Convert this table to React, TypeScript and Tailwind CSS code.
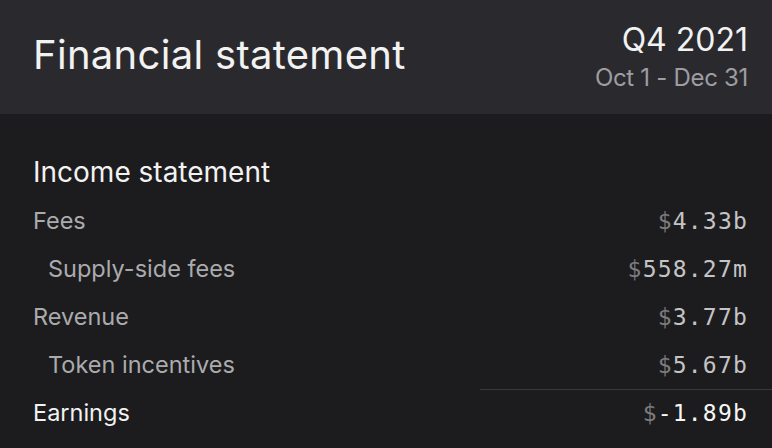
import React from 'react';

type Row = { label: string; value: string; sub?: boolean; total?: boolean };

const rows: Row[] = [
  { label: 'Fees', value: '4.33b' },
  { label: 'Supply-side fees', value: '558.27m', sub: true },
  { label: 'Revenue', value: '3.77b' },
  { label: 'Token incentives', value: '5.67b', sub: true },
  { label: 'Earnings', value: '-1.89b', total: true },
];

const sans = 'font-["Inter","Noto_Sans",sans-serif]';
const mono = 'font-["DejaVu_Sans_Mono","Liberation_Mono",monospace]';

function Money({ value, total }: { value: string; total?: boolean }) {
  return (
    <span className={`${mono} text-[23px] tracking-[1.2px] leading-none`}>
      <span className="text-[#7c7c80]">$</span>
      <span className={total ? 'text-[#f6f6f6]' : 'text-[#c4c4c6]'}>{value}</span>
    </span>
  );
}

export default function App() {
  return (
    <div className={`${sans} h-[448px] w-[772px] overflow-hidden bg-[#1c1c1e]`}>
      <div className="flex h-[114px] items-start justify-between bg-[#2a2a2e] pl-[33px] pr-[24px]">
        <h1 className="mt-[31px] text-[40px] leading-[48px] tracking-[0.3px] text-[#f2f2f2]">
          Financial statement
        </h1>
        <div className="mt-[21px] flex flex-col items-end">
          <div className="text-[32px] leading-[38px] text-[#f2f2f2]">Q4 2021</div>
          <div className="mt-[5px] text-[24px] leading-[28px] tracking-[-0.3px] text-[#9d9da2]">Oct 1 - Dec 31</div>
        </div>
      </div>

      <div className="pl-[33px] pr-[24px] pt-[41px]">
        <h2 className="text-[28px] leading-[34px] text-[#f2f2f2]">Income statement</h2>
        <div className="mt-[8px] flex flex-col">
          {rows.map((r) => (
            <div
              key={r.label}
              className={`flex h-[48px] items-center justify-between ${r.total ? 'relative' : ''}`}
            >
              {r.total && <div className="absolute right-[-24px] top-0 h-px w-[292px] bg-[#38383b]" />}
              <span
                className={`text-[23.5px] leading-none ${r.sub ? 'pl-[15px]' : ''} ${
                  r.total ? 'text-[#f2f2f2]' : 'text-[#ababae]'
                }`}
              >
                {r.label}
              </span>
              <Money value={r.value} total={r.total} />
            </div>
          ))}
        </div>
      </div>
    </div>
  );
}
